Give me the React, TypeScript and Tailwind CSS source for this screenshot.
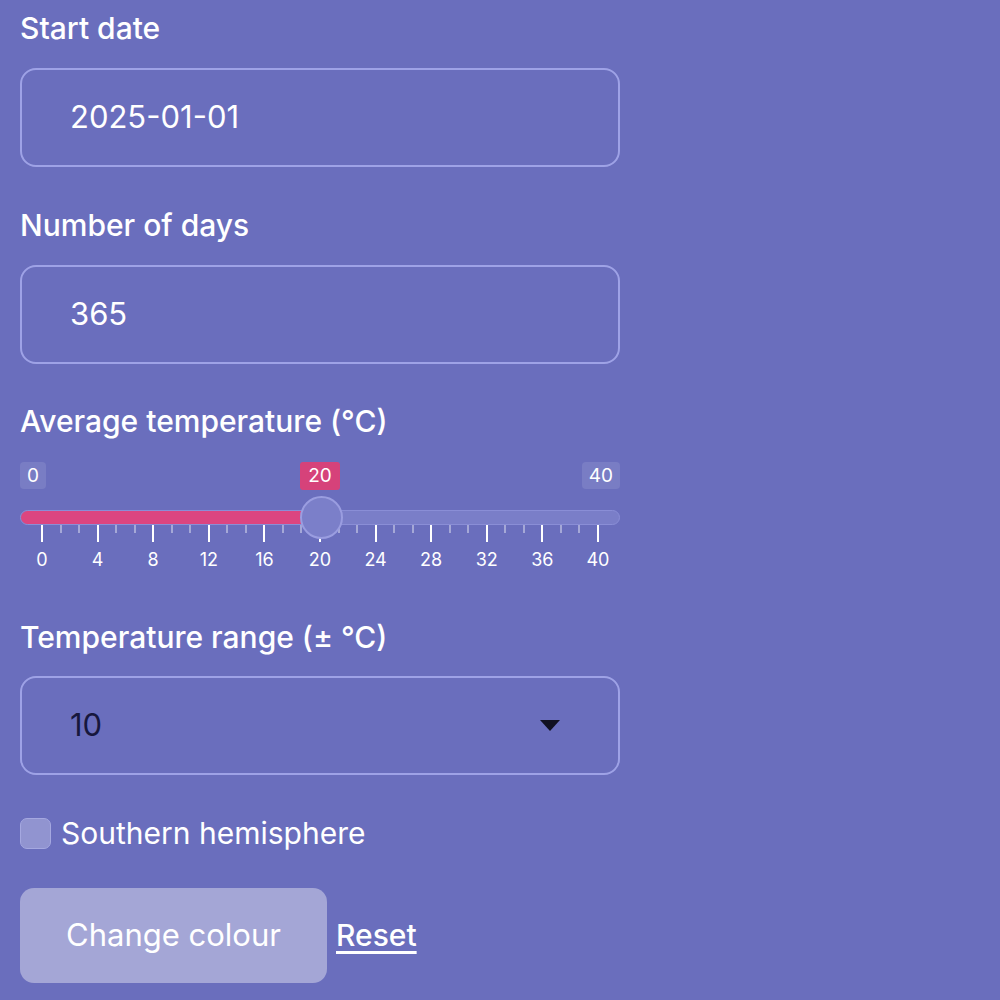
import React from "react";

const majors = [0, 4, 8, 12, 16, 20, 24, 28, 32, 36, 40];

function Slider() {
  const ticks: React.ReactNode[] = [];
  for (let i = 0; i <= 30; i++) {
    const major = i % 3 === 0;
    ticks.push(
      <div key={i} className={major ? "h-[19px] w-[2px] bg-white" : "h-[10px] w-[2px] bg-white/40"} />
    );
  }
  return (
    <div className="w-[600px] pt-[21px]">
      <div className="relative flex h-[27px] justify-between text-[19px] leading-[27px]">
        <div className="rounded-[4px] bg-white/10 px-[7px]">0</div>
        <div className="absolute left-[280px] top-0 w-[40px] rounded-[3px] bg-[#d6427a] text-center leading-[28px]">20</div>
        <div className="rounded-[4px] bg-white/10 px-[7px]">40</div>
      </div>
      <div className="relative mt-[21px] h-[15px] rounded-full border border-[#8a8ed6] bg-[#7a7ec8]">
        <div className="h-full w-[300px] rounded-l-full bg-[#dc4580]" />
        <div className="absolute left-[279px] top-[-15px] h-[43px] w-[43px] rounded-full border-2 border-[#9a9de0] bg-[#7b7fc9]" />
      </div>
      <div className="mt-[-2px] flex items-start justify-between px-[21px]">{ticks}</div>
      <div className="mt-[7px] flex justify-between px-[2px]">
        {majors.map((m) => (
          <div key={m} className="w-[40px] text-center text-[18px] leading-[22px]">
            {m}
          </div>
        ))}
      </div>
    </div>
  );
}

function Field({ children }: { children: React.ReactNode }) {
  return (
    <div className="flex h-[99px] items-center rounded-[16px] border-2 border-[#9ea2e6] px-[48px] text-[31px]">
      {children}
    </div>
  );
}

export default function App() {
  return (
    <div
      className="min-h-[1000px] w-[1000px] bg-[#6a6ebd] pl-[20px] pt-[8px] text-white"
      style={{ fontFamily: "Inter, 'Noto Sans', sans-serif" }}
    >
      <div className="flex w-[600px] flex-col">
        <div className="text-[30px] font-medium leading-[40px]">Start date</div>
        <div className="mt-[20px]">
          <Field>2025-01-01</Field>
        </div>
        <div className="mt-[38px] text-[30px] font-medium leading-[40px]">Number of days</div>
        <div className="mt-[20px]">
          <Field>365</Field>
        </div>
        <div className="mt-[37px] text-[30px] font-medium leading-[40px]">Average temperature (°C)</div>
        <Slider />
        <div className="mt-[46px] text-[30px] font-medium leading-[40px]">Temperature range (± °C)</div>
        <div className="mt-[19px] flex h-[99px] items-center justify-between rounded-[16px] border-2 border-[#9ea2e6] pl-[48px] pr-[58px] text-[31px] text-[#17173d]">
          <span>10</span>
          <svg width="20" height="12" viewBox="0 0 20 12">
            <polygon points="0,0 20,0 10,11" fill="#111122" />
          </svg>
        </div>
        <div className="mt-[38px] flex items-center gap-[10px]">
          <div className="h-[31px] w-[31px] rounded-[7px] border border-[#a5a8e0] bg-[#9194d0]" />
          <span className="text-[30px] leading-[40px]">Southern hemisphere</span>
        </div>
        <div className="mt-[35px] flex items-center gap-[9px]">
          <button className="h-[95px] w-[307px] rounded-[14px] bg-[#a4a6d6] text-[31px] text-white">Change colour</button>
          <a className="text-[30px] font-medium underline underline-offset-[5px]">Reset</a>
        </div>
      </div>
    </div>
  );
}
